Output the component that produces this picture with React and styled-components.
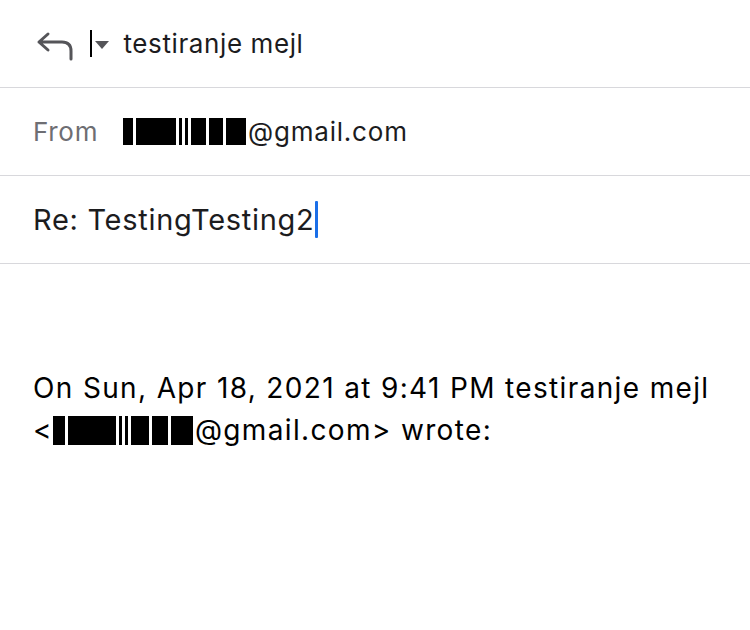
import React from "react";
import styled, { createGlobalStyle } from "styled-components";

const Global = createGlobalStyle`
  html, body {
    margin: 0;
    padding: 0;
    background: #ffffff;
  }
  body {
    font-family: Inter, "Liberation Sans", sans-serif;
    color: #1c1c1e;
  }
`;

const Redacted = ({ blocks, h }) => (
  <RedactGroup>
    {blocks.map((w, i) => (
      <Bar key={i} $w={w} $h={h} />
    ))}
  </RedactGroup>
);

export default function App() {
  return (
    <>
      <Global />
      <Screen>
        <Row>
          <ReplyIcon viewBox="0 0 40 32" aria-hidden="true">
            <path
              d="M12 4 L3 12 L12 20 M3 12 H26 Q35 12 35 21 V29"
              fill="none"
              stroke="#555559"
              strokeWidth="3"
              strokeLinecap="round"
              strokeLinejoin="round"
            />
          </ReplyIcon>
          <Caret />
          <Dropdown viewBox="0 0 14 10" aria-hidden="true">
            <path d="M0 1 H14 L7 9 Z" fill="#555559" />
          </Dropdown>
          <Title>testiranje mejl</Title>
        </Row>
        <Row>
          <Label>From</Label>
          <Address>
            <Redacted blocks={[10, 40, 3, 3, 15, 14, 20]} h={27} />
            @gmail.com
          </Address>
        </Row>
        <Row>
          <Subject>
            Re: TestingTesting2
            <BlueCaret />
          </Subject>
        </Row>
        <Body>
          <p>On Sun, Apr 18, 2021 at 9:41 PM testiranje mejl</p>
          <p>
            &lt;
            <Redacted blocks={[12, 48, 3, 3, 18, 16, 22]} h={29} />
            @gmail.com&gt; wrote:
          </p>
        </Body>
      </Screen>
    </>
  );
}

const Screen = styled.div`
  width: 750px;
  height: 630px;
  background: #fff;
`;

const Row = styled.div`
  height: 88px;
  box-sizing: border-box;
  border-bottom: 1px solid #d8d8dc;
  display: flex;
  align-items: center;
  padding: 0 33px;
`;

const ReplyIcon = styled.svg`
  width: 40px;
  height: 32px;
  margin-left: 3px;
  margin-top: 4px;
`;

const Caret = styled.span`
  width: 1.5px;
  height: 27px;
  background: #000;
  margin-left: 14px;
`;

const Dropdown = styled.svg`
  width: 14px;
  height: 10px;
  margin-left: 3px;
  margin-top: 2px;
`;

const Title = styled.span`
  font-size: 26px;
  letter-spacing: 0.6px;
  margin-left: 15px;
  color: #1c1c1e;
`;

const Label = styled.span`
  font-size: 26px;
  letter-spacing: 0.7px;
  color: #6e6e73;
  width: 90px;
`;

const Address = styled.span`
  display: inline-flex;
  align-items: center;
  font-size: 26px;
  letter-spacing: 0.8px;
  color: #1c1c1e;
`;

const RedactGroup = styled.span`
  display: inline-flex;
  gap: 3px;
  align-items: center;
  margin-right: 2px;
`;

const Bar = styled.span`
  display: inline-block;
  width: ${(p) => p.$w}px;
  height: ${(p) => p.$h}px;
  background: #000;
`;

const Subject = styled.span`
  font-size: 29px;
  letter-spacing: 0.7px;
  color: #1c1c1e;
  display: inline-flex;
  align-items: center;
`;

const BlueCaret = styled.span`
  display: inline-block;
  width: 3px;
  height: 37px;
  background: #1a6fe8;
  border-radius: 1px;
  margin-left: 1px;
`;

const Body = styled.div`
  padding: 103px 33px 0;
  font-size: 28px;
  letter-spacing: 1.35px;
  line-height: 42px;
  color: #000;
  & p {
    margin: 0;
    display: flex;
    align-items: center;
    white-space: pre;
  }
`;
